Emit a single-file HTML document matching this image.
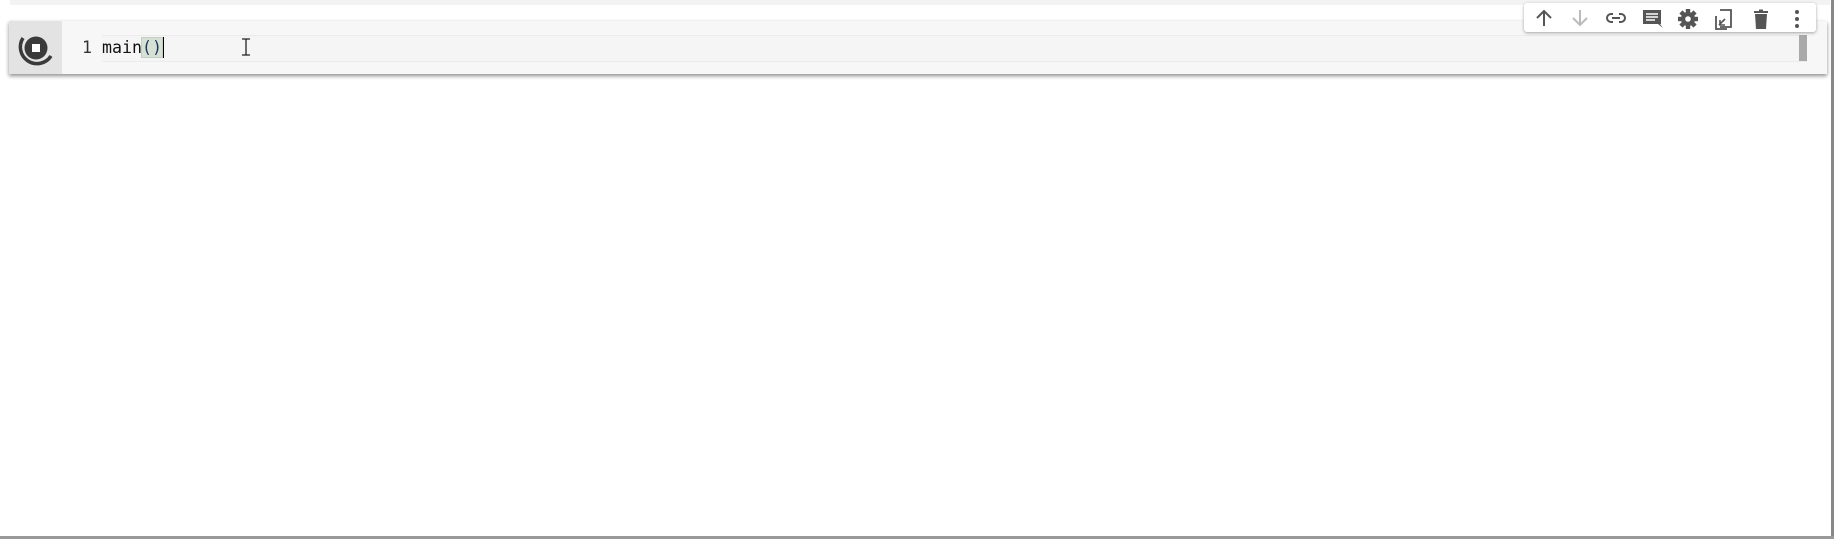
<!DOCTYPE html>
<html><head><style>
html,body{margin:0;padding:0;width:1834px;height:539px;background:#fff;overflow:hidden;position:relative;font-family:"Liberation Sans",sans-serif}
.topstrip{position:absolute;left:10px;top:0;width:1820px;height:5px;background:#f3f3f3}
.rb{position:absolute;left:1831px;top:0;width:3px;height:539px;background:#888}
.bb{position:absolute;left:0;top:536px;width:1834px;height:3px;background:#999}
.cell{position:absolute;left:9px;top:21px;width:1818px;height:53px;background:#f7f7f7;box-shadow:0 2px 4px rgba(0,0,0,.45)}
.gut{position:absolute;left:0;top:0;width:53px;height:53px;background:#e3e3e3}
.line{position:absolute;left:93px;top:14px;width:1705px;height:25px;border-top:1px solid #ececec;border-bottom:1px solid #ececec;background:#f5f5f5}
.code{position:absolute;top:14px;left:73px;font-family:"DejaVu Sans Mono","Liberation Mono",monospace;font-size:16.6px;line-height:25px;white-space:pre;color:#111}
.ln{color:#333}
.par{background:#d7e0d5;outline:1px solid #c3cfc3;color:#1a3a5a}
.cur{display:inline-block;width:2px;height:21px;background:#000;vertical-align:-5px}
.thumb{position:absolute;left:1790px;top:14px;width:8px;height:26px;background:#a9a9a9}
.tb{position:absolute;left:1524px;top:3px;width:292px;height:29px;background:#fff;border-radius:3px;box-shadow:0 1px 3px rgba(0,0,0,.35)}
.tb svg{position:absolute;top:5px}
</style></head><body>
<div class="topstrip"></div>
<div class="cell">
  <div class="gut">
    <svg width="53" height="53" viewBox="0 0 53 53">
      <circle cx="27" cy="27" r="11.5" fill="#3a3a3a"/>
      <rect x="23" y="23" width="8" height="8" fill="#fff"/>
      <path d="M14 17 A16 16 0 0 0 42 35" fill="none" stroke="#3a3a3a" stroke-width="3.5"/>
    </svg>
  </div>
  <div class="line"></div>
  <div class="code"><span class="ln">1</span> main<span class="par">()</span><span class="cur"></span></div>
  <svg style="position:absolute;left:232px;top:17px" width="10" height="18"><path d="M1 1h8M5 1v16M1 17h8" stroke="#222" stroke-width="1.3" fill="none"/></svg>
  <div class="thumb"></div>
</div>
<div class="tb">
  <svg style="left:8px" width="24" height="20" viewBox="0 0 24 20"><path d="M12 18V3M5 10l7-7 7 7" stroke="#555" stroke-width="2" fill="none"/></svg>
  <svg style="left:44px" width="24" height="20" viewBox="0 0 24 20"><path d="M12 2v15M5 10l7 7 7-7" stroke="#bbb" stroke-width="2" fill="none"/></svg>
  <svg style="left:80px" width="24" height="20" viewBox="0 0 24 20"><path d="M9 6H7a4 4 0 0 0 0 8h2M15 6h2a4 4 0 0 1 0 8h-2M8 10h8" stroke="#555" stroke-width="2" fill="none"/></svg>
  <svg style="left:116px" width="24" height="22" viewBox="0 0 24 22"><path d="M3 2h18v14h-1l3 4-5-4H3z" fill="#555"/><path d="M6 6h12M6 9h12M6 12h9" stroke="#fff" stroke-width="1.6"/></svg>
  <svg style="left:152px" width="24" height="22" viewBox="0 0 24 22"><g transform="translate(12 11)" fill="#555"><circle r="7"/><g id="t"><rect x="-2.2" y="-10" width="4.4" height="5"/></g><use href="#t" transform="rotate(45)"/><use href="#t" transform="rotate(90)"/><use href="#t" transform="rotate(135)"/><use href="#t" transform="rotate(180)"/><use href="#t" transform="rotate(225)"/><use href="#t" transform="rotate(270)"/><use href="#t" transform="rotate(315)"/><circle r="2.8" fill="#fff"/></g></svg>
  <svg style="left:188px" width="24" height="22" viewBox="0 0 24 22"><path d="M8 2h11v17H8" stroke="#555" stroke-width="1.8" fill="none"/><path d="M4 8v13h11" stroke="#555" stroke-width="1.8" fill="none"/><path d="M7 17l6-6M8 12v5h5" stroke="#555" stroke-width="1.6" fill="none"/></svg>
  <svg style="left:225px" width="24" height="22" viewBox="0 0 24 22"><path d="M6 6h12l-1 15H7z" fill="#555"/><rect x="5" y="3" width="14" height="2" fill="#555"/><rect x="10" y="1.5" width="4" height="2" fill="#555"/></svg>
  <svg style="left:261px" width="24" height="22" viewBox="0 0 24 22"><circle cx="12" cy="4" r="2" fill="#555"/><circle cx="12" cy="11" r="2" fill="#555"/><circle cx="12" cy="18" r="2" fill="#555"/></svg>
</div>
<div class="rb"></div>
<div class="bb"></div>
</body></html>
